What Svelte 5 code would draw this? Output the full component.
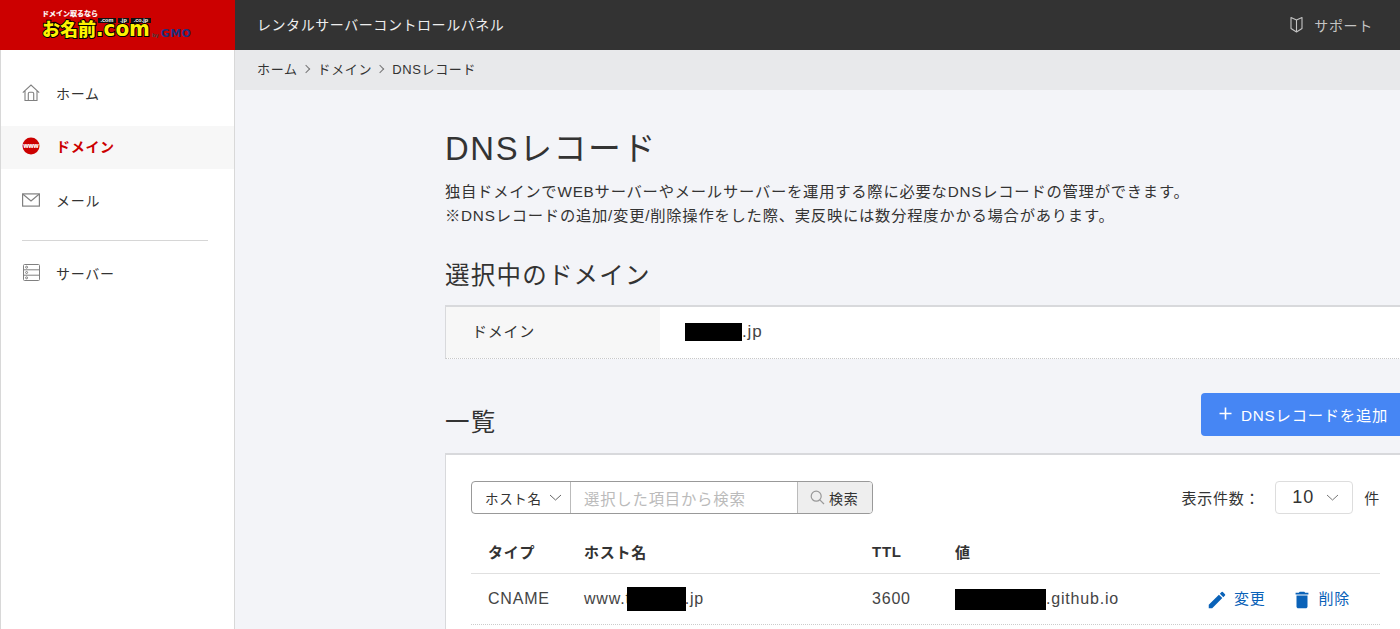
<script>
  const nav = [
    { id: 'home', label: 'ホーム' },
    { id: 'domain', label: 'ドメイン', active: true },
    { id: 'mail', label: 'メール' },
    { id: 'server', label: 'サーバー', divided: true },
  ];
</script>

<div class="page">
  <header class="topbar">
    <div class="logo">
      <div class="logo-tag">ドメイン取るなら</div>
      <div class="logo-tlds"><span>.com</span><span>.jp</span><span>.co.jp</span></div>
      <div class="logo-main"><span>お名前</span><b>.com</b></div>
      <div class="logo-gmo"><small>by</small>GMO</div>
    </div>
    <div class="title">レンタルサーバーコントロールパネル</div>
    <div class="support">
      <svg width="13" height="17" viewBox="0 0 13 17" fill="none" stroke="#c4c4c4" stroke-width="1.1">
        <path d="M1 1.5 L6.5 4 L12 1.5 V12.5 L6.5 16 L1 12.5 Z M6.5 4 V16" stroke-linejoin="round" />
      </svg>
      <span>サポート</span>
    </div>
  </header>

  <div class="body">
    <aside class="sidebar">
      {#each nav as item}
        {#if item.divided}<hr />{/if}
        <div class="nav-item" class:active={item.active}>
          <span class="nav-icon">
            {#if item.id === 'home'}
              <svg width="18" height="18" viewBox="0 0 18 18" fill="none" stroke="#808080" stroke-width="1.1">
                <path d="M0.8 8.6 L9 1 L17.2 8.6 M3 7 V16.5 H15 V7" />
                <path d="M6.3 16.5 V9.6 Q6.3 8.2 7.7 8.2 H10.3 Q11.7 8.2 11.7 9.6 V16.5" />
              </svg>
            {:else if item.id === 'domain'}
              <svg width="18" height="18" viewBox="0 0 18 18">
                <circle cx="9" cy="9" r="8.5" fill="#cc0000" />
                <text x="9" y="11" text-anchor="middle" class="www">www</text>
              </svg>
            {:else if item.id === 'mail'}
              <svg width="18" height="14" viewBox="0 0 18 14" fill="none" stroke="#808080" stroke-width="1.2">
                <rect x="0.6" y="0.9" width="16.8" height="12.2" />
                <path d="M1 1.2 L9 8 L17 1.2" />
              </svg>
            {:else}
              <svg width="17" height="17" viewBox="0 0 17 17" fill="none" stroke="#808080" stroke-width="1">
                <rect x="0.5" y="0.5" width="16" height="16" rx="1" />
                <path d="M0.5 5.8 H16.5 M0.5 11.2 H16.5" />
                <circle cx="3.6" cy="3.2" r="1" /><circle cx="3.6" cy="8.5" r="1" /><circle cx="3.6" cy="13.8" r="1" />
              </svg>
            {/if}
          </span>
          <span>{item.label}</span>
        </div>
      {/each}
    </aside>

    <div class="content">
      <nav class="crumbs">
        <span>ホーム</span><i></i><span>ドメイン</span><i></i><span>DNSレコード</span>
      </nav>

      <main class="main">
        <h1>DNSレコード</h1>
        <p class="lead">
          独自ドメインでWEBサーバーやメールサーバーを運用する際に必要なDNSレコードの管理ができます。<br />
          ※DNSレコードの追加/変更/削除操作をした際、実反映には数分程度かかる場合があります。
        </p>

        <h2 class="selected-title">選択中のドメイン</h2>
        <div class="domain-card">
          <div class="domain-label">ドメイン</div>
          <div class="domain-value"><span class="mask mask-domain"></span>.jp</div>
        </div>

        <div class="list-head">
          <h2>一覧</h2>
          <button class="add">
            <svg width="13" height="13" viewBox="0 0 13 13" stroke="#fff" stroke-width="1.6"><path d="M6.5 0.5 V12.5 M0.5 6.5 H12.5" /></svg>
            DNSレコードを追加
          </button>
        </div>

        <section class="list-card">
          <div class="tools">
            <div class="search">
              <div class="search-select">ホスト名
                <svg width="13" height="7" viewBox="0 0 13 7" fill="none" stroke="#666" stroke-width="1"><path d="M1 1 L6.5 6 L12 1" /></svg>
              </div>
              <div class="search-input">選択した項目から検索</div>
              <div class="search-btn">
                <svg width="15" height="15" viewBox="0 0 15 15" fill="none" stroke="#999" stroke-width="1.2"><circle cx="6.2" cy="6.2" r="5" /><path d="M9.8 9.8 L14 14" /></svg>
                検索
              </div>
            </div>
            <div class="per-page">
              <span>表示件数：</span>
              <div class="per-select">10
                <svg width="13" height="7" viewBox="0 0 13 7" fill="none" stroke="#777" stroke-width="1"><path d="M1 1 L6.5 6 L12 1" /></svg>
              </div>
              <span>件</span>
            </div>
          </div>

          <div class="row row-head">
            <div>タイプ</div><div>ホスト名</div><div>TTL</div><div>値</div><div></div>
          </div>
          <div class="row row-data">
            <div>CNAME</div>
            <div class="masked">www.t<span class="mask mask-host"></span>.jp</div>
            <div>3600</div>
            <div class="masked"><span class="mask mask-value"></span>.github.io</div>
            <div class="actions">
              <span class="action">
                <svg width="22" height="22" viewBox="0 0 24 24" fill="#0a62b8"><path d="M3 17.25V21h3.75L17.81 9.94l-3.75-3.75L3 17.25zM20.71 7.04a1 1 0 0 0 0-1.41l-2.34-2.34a1 1 0 0 0-1.41 0l-1.83 1.83 3.75 3.75 1.83-1.83z" /></svg>
                変更
              </span>
              <span class="action">
                <svg width="22" height="22" viewBox="0 0 24 24" fill="#0a62b8"><path d="M6 19c0 1.1.9 2 2 2h8c1.1 0 2-.9 2-2V7H6v12zM19 4h-3.5l-1-1h-5l-1 1H5v2h14V4z" /></svg>
                削除
              </span>
            </div>
          </div>
        </section>
      </main>
    </div>
  </div>
</div>

<style>
  :global(body) {
    margin: 0;
    overflow: hidden;
  }

  .page :global(*) {
    letter-spacing: 0.05em;
  }

  .page {
    width: 1400px;
    height: 629px;
    overflow: hidden;
    display: flex;
    flex-direction: column;
    color: #333;
    font-family: 'Liberation Sans', 'Noto Sans CJK JP', sans-serif;
    font-size: 15px;
    font-weight: 400;
  }

  .topbar {
    flex: 0 0 50px;
    display: flex;
    align-items: center;
    background: #333;
    color: #eee;
  }

  .logo {
    position: relative;
    width: 235px;
    height: 50px;
    flex: none;
    background: #cc0000;
    overflow: hidden;
  }

  .logo-tag {
    position: absolute;
    left: 42px;
    top: 9px;
    color: #fff;
    font-size: 7px;
    line-height: 9px;
    font-weight: 700;
    letter-spacing: 0;
    white-space: nowrap;
    -webkit-text-stroke: 0.2px #fff;
  }

  .logo-tlds {
    position: absolute;
    left: 98px;
    top: 18px;
    display: flex;
    gap: 2px;
    z-index: 1;
  }

  .logo-tlds span {
    padding: 0 2.5px;
    background: #111;
    color: #fff;
    font-size: 5.5px;
    line-height: 5px;
    font-weight: 700;
    letter-spacing: 0;
  }

  .logo-main {
    position: absolute;
    left: 42px;
    top: 18px;
    display: flex;
    align-items: baseline;
    height: 22px;
    color: #fff200;
    white-space: nowrap;
    font-weight: 900;
    -webkit-text-stroke: 2px #000;
    paint-order: stroke fill;
  }

  .logo-main span {
    font-size: 18px;
    line-height: 22px;
    letter-spacing: 0;
  }

  .logo-main b {
    font-size: 21px;
    line-height: 22px;
    letter-spacing: 0;
    font-family: 'DejaVu Sans', sans-serif;
    transform: scaleX(0.95);
    transform-origin: left;
  }

  .logo-gmo {
    position: absolute;
    left: 152px;
    top: 28px;
    color: #1c2f7c;
    font-family: 'DejaVu Sans', sans-serif;
    font-size: 11px;
    line-height: 12px;
    font-weight: 700;
    letter-spacing: 0.3px;
    white-space: nowrap;
  }

  .logo-gmo small {
    color: #444;
    font-size: 5px;
    margin-right: 2px;
    letter-spacing: 0;
  }

  .title {
    margin-left: 22px;
    padding-bottom: 2px;
    font-size: 14px;
    letter-spacing: 0.04em;
  }

  .support {
    margin-left: auto;
    margin-right: 27px;
    padding-bottom: 1px;
    display: flex;
    align-items: center;
    gap: 11px;
    color: #c4c4c4;
    font-size: 14px;
  }

  .body {
    flex: 1;
    min-height: 0;
    display: flex;
  }

  .sidebar {
    width: 235px;
    flex: none;
    box-sizing: border-box;
    border-left: 1px solid #d8d8d8;
    border-right: 1px solid #d8d8d8;
    background: #fff;
    padding-top: 22px;
  }

  .nav-item {
    height: 43px;
    box-sizing: border-box;
    margin-bottom: 10.5px;
    padding-left: 21px;
    padding-bottom: 2px;
    display: flex;
    align-items: center;
    gap: 16px;
    font-size: 14px;
    color: #333;
  }

  .nav-item.active {
    background: #f7f7f7;
    color: #cc0000;
    font-weight: 700;
  }

  .nav-icon {
    width: 18px;
    display: flex;
    justify-content: center;
  }

  .www {
    fill: #fff;
    font-size: 6.5px;
    font-weight: 700;
    letter-spacing: 0;
    stroke: #fff;
    stroke-width: 0.2px;
  }

  hr {
    margin: 18px 26px 11px 21px;
    border: 0;
    border-top: 1px solid #d6d6d6;
  }

  .content {
    flex: 1;
    min-width: 0;
    display: flex;
    flex-direction: column;
    background: #f3f4f8;
  }

  .crumbs {
    flex: 0 0 40px;
    box-sizing: border-box;
    padding: 0 0 3px 22px;
    display: flex;
    align-items: center;
    gap: 9px;
    background: #e8e9eb;
    font-size: 13px;
    color: #333;
  }

  .crumbs i {
    width: 5px;
    height: 5px;
    margin-left: -4px;
    border-top: 1px solid #777;
    border-right: 1px solid #777;
    transform: rotate(45deg);
  }

  .main {
    flex: 1;
    width: 960px;
    padding: 37px 0 0 210px;
  }

  h1 {
    margin: 0;
    font-size: 32.8px;
    line-height: 44px;
    font-weight: 400;
    color: #333;
  }

  .lead {
    margin: 9px 0 0;
    font-size: 15.3px;
    line-height: 24px;
    color: #333;
    white-space: nowrap;
  }

  h2 {
    margin: 0;
    font-size: 24.5px;
    line-height: 32px;
    font-weight: 400;
  }

  .selected-title {
    margin-top: 32px;
  }

  .domain-card {
    margin-top: 13px;
    height: 51px;
    display: flex;
    background: #fff;
    border: 1px solid #d8d9dc;
    border-top-width: 2px;
    border-bottom: 1px dotted #c8c8c8;
    border-right: 0;
  }

  .domain-label {
    width: 214px;
    padding: 0 0 4px 26px;
    box-sizing: border-box;
    display: flex;
    align-items: center;
    background: #f7f7f7;
    font-size: 15px;
  }

  .domain-value {
    padding: 0 0 2px 25px;
    display: flex;
    align-items: center;
    font-size: 17px;
    color: #444;
  }

  .mask {
    display: inline-block;
    background: #000;
  }

  .mask-domain {
    width: 57px;
    height: 18px;
  }

  .list-head {
    height: 60px;
    margin-top: 34px;
    display: flex;
    justify-content: space-between;
  }

  .list-head h2 {
    margin-top: 14px;
  }

  .add {
    width: 204px;
    height: 43px;
    padding: 0 0 2px 18px;
    display: flex;
    align-items: center;
    gap: 9px;
    border: 0;
    border-radius: 4px;
    background: #4686f4;
    color: #fff;
    font: inherit;
    font-size: 15.3px;
  }

  .list-card {
    background: #fff;
    border: 1px solid #d8d9dc;
    border-top-width: 2px;
    border-right: 0;
    padding: 26px 25px 0 25px;
    height: 200px;
  }

  .tools {
    display: flex;
    align-items: center;
    justify-content: space-between;
  }

  .search {
    display: flex;
    height: 31px;
    border: 1px solid #999;
    border-radius: 4px;
    font-size: 13.5px;
    overflow: hidden;
  }

  .search-select {
    width: 99px;
    box-sizing: border-box;
    padding-left: 13px;
    display: flex;
    align-items: center;
    gap: 7px;
    border-right: 1px solid #bbb;
  }

  .search-input {
    width: 226px;
    box-sizing: border-box;
    padding-left: 13px;
    display: flex;
    align-items: center;
    color: #bbb;
    font-size: 15.4px;
  }

  .search-btn {
    width: 75px;
    box-sizing: border-box;
    padding-left: 12px;
    display: flex;
    align-items: center;
    gap: 4px;
    background: #eee;
    border-left: 1px solid #bbb;
    font-size: 14px;
  }

  .per-page {
    display: flex;
    align-items: center;
    gap: 11px;
    font-size: 15px;
  }

  .per-page span:first-child {
    margin-right: 4px;
  }

  .per-select {
    width: 78px;
    height: 33px;
    box-sizing: border-box;
    padding: 0 13px 0 16px;
    display: flex;
    align-items: center;
    justify-content: space-between;
    border: 1px solid #ddd;
    border-radius: 4px;
    font-size: 18px;
  }

  .row {
    display: grid;
    grid-template-columns: 96px 288px 83px 250px 1fr;
    box-sizing: border-box;
    padding-left: 17px;
    align-items: center;
    border-bottom: 1px solid #e0e0e0;
  }

  .row-head {
    margin-top: 24px;
    height: 36px;
    padding-bottom: 8px;
    font-weight: 700;
    font-size: 15px;
  }

  .row-data {
    height: 51px;
    font-size: 16px;
    color: #444;
    border-bottom: 1px dotted #ccc;
  }

  .masked {
    display: flex;
    align-items: center;
  }

  .mask-host {
    width: 59px;
    height: 24px;
    margin-left: -4px;
    margin-right: -1px;
  }

  .mask-value {
    width: 91px;
    height: 21px;
  }

  .actions {
    display: flex;
    gap: 25px;
    padding-left: 1px;
    padding-bottom: 3px;
    color: #0a62b8;
    font-size: 15px;
  }

  .action {
    display: flex;
    align-items: center;
    gap: 6px;
  }

  .action svg {
    margin-top: 4px;
  }
</style>
